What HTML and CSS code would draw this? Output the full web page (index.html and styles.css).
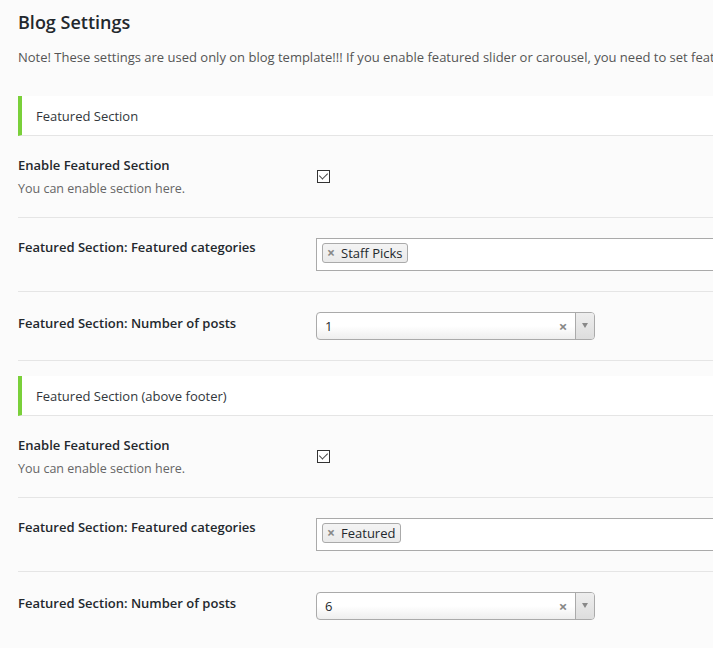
FILE: index.html
```html
<!DOCTYPE html>
<html lang="en">
<head>
    <meta charset="UTF-8">
    <title>Blog Settings</title>
    <link rel="stylesheet" href="styles.css">
</head>
<body>
    <div class="wrap">
        <h2>Blog Settings</h2>
        <p class="note">Note! These settings are used only on blog template!!! If you enable featured slider or carousel, you need to set featured image for posts.</p>

        <!-- Featured Section -->
        <div class="section-title">Featured Section</div>
        <div class="row">
            <div class="label">
                <strong>Enable Featured Section</strong>
                <span class="desc">You can enable section here.</span>
            </div>
            <div class="field field-check"><span class="checkbox checked"></span></div>
        </div>
        <div class="row">
            <div class="label"><strong>Featured Section: Featured categories</strong></div>
            <div class="field">
                <div class="multi-select">
                    <span class="tag"><span class="tag-x">&times;</span>Staff Picks</span>
                </div>
            </div>
        </div>
        <div class="row">
            <div class="label label-select"><strong>Featured Section: Number of posts</strong></div>
            <div class="field">
                <div class="select">
                    <span class="select-value">1</span>
                    <span class="select-clear">&times;</span>
                    <span class="select-arrow"></span>
                </div>
            </div>
        </div>

        <!-- Featured Section (above footer) -->
        <div class="section-title">Featured Section (above footer)</div>
        <div class="row">
            <div class="label">
                <strong>Enable Featured Section</strong>
                <span class="desc">You can enable section here.</span>
            </div>
            <div class="field field-check"><span class="checkbox checked"></span></div>
        </div>
        <div class="row">
            <div class="label"><strong>Featured Section: Featured categories</strong></div>
            <div class="field">
                <div class="multi-select">
                    <span class="tag"><span class="tag-x">&times;</span>Featured</span>
                </div>
            </div>
        </div>
        <div class="row last">
            <div class="label label-select"><strong>Featured Section: Number of posts</strong></div>
            <div class="field">
                <div class="select">
                    <span class="select-value">6</span>
                    <span class="select-clear">&times;</span>
                    <span class="select-arrow"></span>
                </div>
            </div>
        </div>
    </div>
</body>
</html>
```

FILE: styles.css
```css
body {
    margin: 0;
    padding: 0;
    background: #fbfbfb;
    font-family: "Open Sans", "Noto Sans", sans-serif;
    font-size: 13px;
    color: #23282d;
    overflow: hidden;
}

.wrap {
    padding: 10px 0 0 18px;
    width: 900px;
}

h2 {
    font-size: 18px;
    font-weight: 600;
    margin: 0;
    line-height: 24px;
}

.note {
    margin: 13px 0 0;
    line-height: 20px;
    color: #555;
    white-space: nowrap;
}

/* Section header bar */
.section-title {
    margin-top: 29px;
    background: #fff;
    border-left: 4px solid #7ad03a;
    border-bottom: 1px solid #e5e5e5;
    height: 39px;
    line-height: 41px;
    padding-left: 14px;
    color: #32373c;
}

.row + .section-title {
    margin-top: 15px;
}

.row {
    display: grid;
    grid-template-columns: 298px 1fr;
    border-bottom: 1px solid #e5e5e5;
}

.row.last {
    border-bottom: none;
}

.label {
    padding: 19px 0 18px;
    line-height: 20px;
}

.label-select {
    padding-top: 21px;
}

.label strong {
    display: block;
    font-weight: 600;
}

.desc {
    display: block;
    margin-top: 4px;
    color: #666;
    font-size: 12.5px;
}

.field {
    padding: 20px 0;
}

.field-check {
    padding-top: 34px;
}

.checkbox {
    display: block;
    width: 11px;
    height: 11px;
    margin-left: 1px;
    border: 1px solid #333;
    background: #fff;
    position: relative;
}

.checkbox.checked::after {
    content: "";
    position: absolute;
    left: 3px;
    top: 0px;
    width: 4px;
    height: 7px;
    border: solid #444;
    border-width: 0 1.5px 1.5px 0;
    transform: rotate(45deg);
}

/* Multi select */
.multi-select {
    width: 520px;
    height: 33px;
    border: 1px solid #aaa;
    background: #fff;
    padding: 4px 5px;
    box-sizing: border-box;
}

.tag {
    display: inline-flex;
    align-items: center;
    height: 20px;
    box-sizing: border-box;
    padding: 0 5px 0 4px;
    border: 1px solid #aaa;
    border-radius: 3px;
    background: linear-gradient(#f4f4f4, #eaeaea);
    line-height: 18px;
}

.tag-x {
    color: #888;
    font-weight: 700;
    font-size: 14px;
    margin-right: 6px;
}

/* Single select */
.select {
    width: 279px;
    height: 28px;
    box-sizing: border-box;
    border: 1px solid #aaa;
    border-radius: 4px;
    background: linear-gradient(#fff 50%, #eee);
    display: flex;
    align-items: center;
    line-height: 26px;
}

.select-value {
    flex: 1;
    padding-left: 8px;
}

.select-clear {
    color: #888;
    font-weight: 700;
    font-size: 15px;
    width: 20px;
    text-align: center;
    margin-right: 2px;
}

.select-arrow {
    width: 18px;
    height: 26px;
    border-left: 1px solid #aaa;
    background: linear-gradient(#eee, #ddd);
    border-radius: 0 3px 3px 0;
    position: relative;
}

.select-arrow::after {
    content: "";
    position: absolute;
    left: 6px;
    top: 10px;
    border-left: 3px solid transparent;
    border-right: 3px solid transparent;
    border-top: 5px solid #888;
}
```
